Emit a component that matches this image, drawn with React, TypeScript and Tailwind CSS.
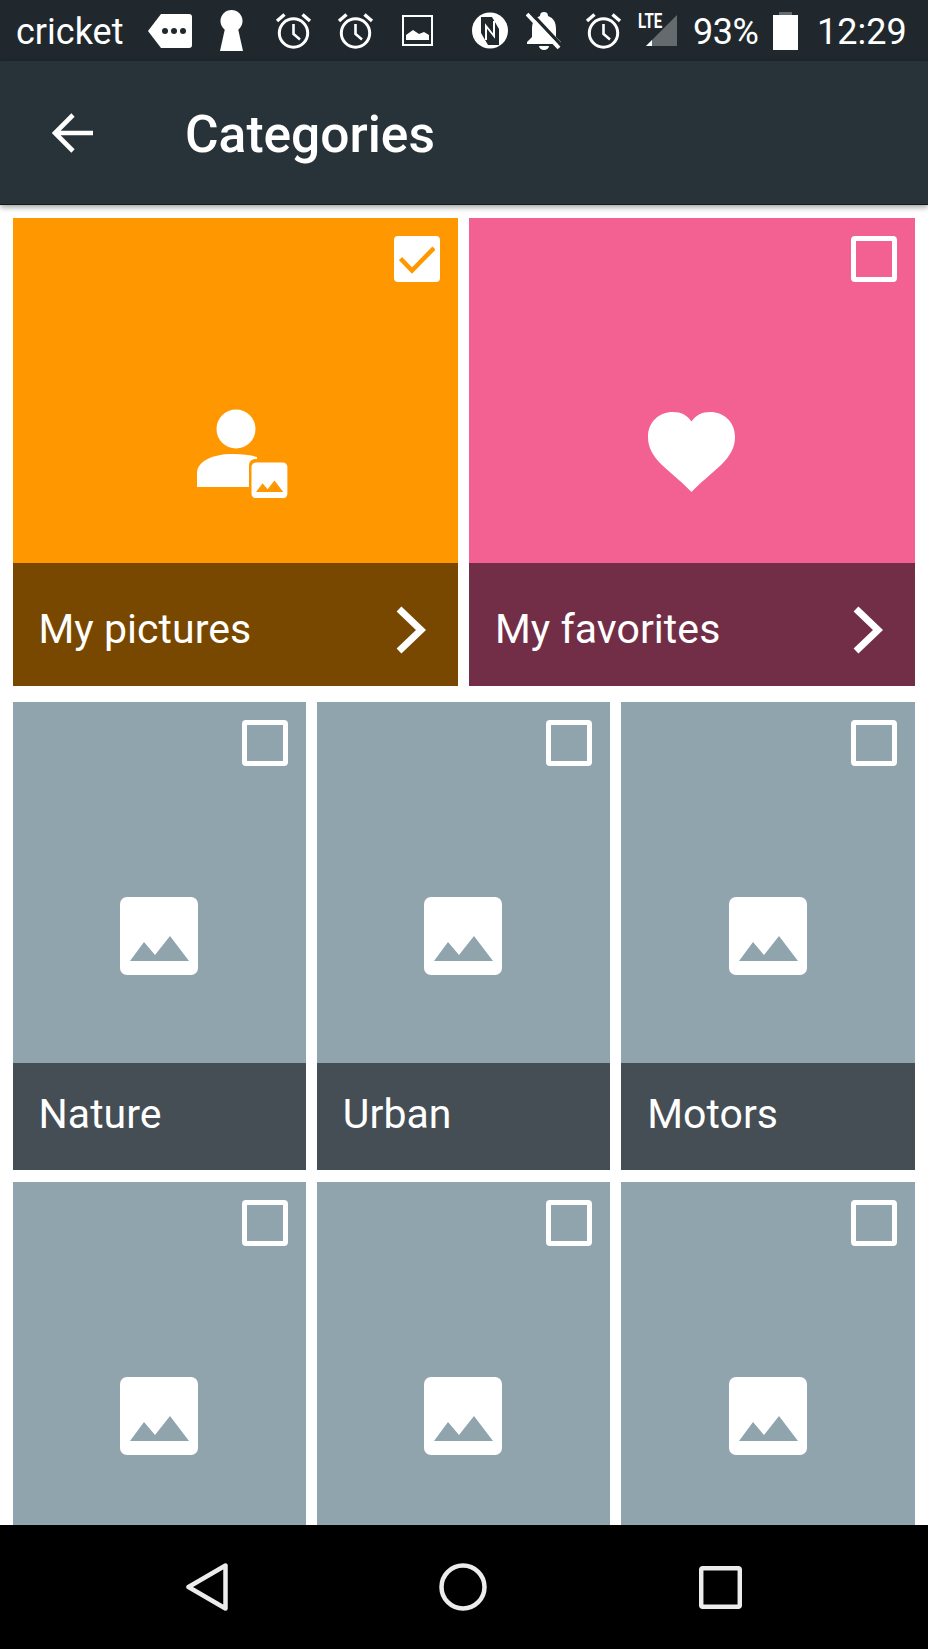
import React from 'react';

const Alarm = ({ className }: { className: string }) => (
    <svg className={className} viewBox="0 0 37 37" fill="none" stroke="white" strokeWidth="3">
        <circle cx="18.5" cy="21" r="14.2" />
        <path d="M18.5 12v10l6.5 5.5" strokeWidth="2.6" />
        <path d="M2 9l7.5-6.5M35 9l-7.5-6.5" strokeWidth="3.4" />
    </svg>
);

const PictureIcon = ({ className, fill = '#90a4ae' }: { className: string; fill?: string }) => (
    <svg className={className} viewBox="0 0 78 78">
        <rect width="78" height="78" rx="7" fill="white" />
        <path d="M10 64L24 45L35 58L50 39L69 64Z" fill={fill} />
    </svg>
);

const Checkbox = ({ checked = false }: { checked?: boolean }) => (
    <div
        className={`absolute top-[17.5px] right-[18px] w-[46px] h-[46.5px] rounded-[4px] border-[5px] border-white ${checked ? 'bg-white' : ''}`}
    >
        {checked && (
            <svg className="absolute top-[5px] left-[0px] w-[36px] h-[28px]" viewBox="0 0 36 28" fill="none">
                <path d="M1.5 12.5L13 24.5L35 2" stroke="#ff9800" strokeWidth="4.5" />
            </svg>
        )}
    </div>
);

const Chevron = () => (
    <svg className="w-[30px] h-[48px]" viewBox="0 0 30 48" fill="none">
        <path d="M3 3L25 24L3 45" stroke="white" strokeWidth="7" />
    </svg>
);

type TileProps = {
    label: string;
    bg: string;
    footer: string;
    checked?: boolean;
    chevron?: boolean;
    bodyHeight: string;
    footerHeight: string;
    children: React.ReactNode;
};

const Tile = ({ label, bg, footer, checked, chevron, bodyHeight, footerHeight, children }: TileProps) => (
    <div className={`relative flex flex-col ${bg}`}>
        <Checkbox checked={checked} />
        <div className={`flex items-center justify-center ${bodyHeight}`}>{children}</div>
        <div className={`flex items-center justify-between pl-[26px] pr-[32px] ${footer} ${footerHeight}`}>
            <span className="text-white text-[41px] leading-none tracking-[0.05px]">{label}</span>
            {chevron && <Chevron />}
        </div>
    </div>
);

const App: React.FC = () => {
    return (
        <div className="flex flex-col h-[1649px] w-[928px] overflow-hidden bg-white font-['Roboto',sans-serif]">
            {/* Status bar */}
            <div className="flex items-center h-[61px] pl-[16px] bg-[#20282d] text-white shrink-0">
                <span className="text-[36px] leading-none w-[105px] pt-[3px]">cricket</span>
                <svg className="ml-[27px] w-[44px] h-[34px]" viewBox="0 0 44 34">
                    <path d="M13 0H41a3 3 0 0 1 3 3V31a3 3 0 0 1-3 3H13L0 17Z" fill="white" />
                    <circle cx="17" cy="17" r="3" fill="#20282d" />
                    <circle cx="26" cy="17" r="3" fill="#20282d" />
                    <circle cx="35" cy="17" r="3" fill="#20282d" />
                </svg>
                <svg className="ml-[28px] w-[23px] h-[41px]" viewBox="0 0 23 41">
                    <circle cx="11.5" cy="11" r="11" fill="white" />
                    <path d="M6 14H17L23 41H0Z" fill="white" />
                </svg>
                <Alarm className="ml-[32px] w-[37px] h-[37px]" />
                <Alarm className="ml-[25px] w-[37px] h-[37px]" />
                <svg className="ml-[28px] w-[31px] h-[31px]" viewBox="0 0 31 31" fill="none">
                    <rect x="1" y="1" width="29" height="29" stroke="white" strokeWidth="2" />
                    <path d="M4 25V20L11 15L17 19L22 17L27 20V25Z" fill="white" />
                </svg>
                <svg className="ml-[39px] w-[36px] h-[37px]" viewBox="0 0 36 37">
                    <circle cx="18" cy="18.5" r="18" fill="white" />
                    <path d="M9 5L20 5L27 17V33L16 33L9 21Z" fill="#20282d" />
                    <path d="M14 28V14L22 24V9" fill="none" stroke="white" strokeWidth="2" />
                </svg>
                <svg className="ml-[18px] w-[36px] h-[38px]" viewBox="0 0 36 38">
                    <path d="M18 0a4 4 0 0 1 4 4c6 2 8 7 8 13v8l5 5v2H1v-2l5-5v-8c0-6 2-11 8-13a4 4 0 0 1 4-4Z" fill="white" />
                    <path d="M13 34h10a5 4 0 0 1-10 0Z" fill="white" />
                    <path d="M4 0L37 35" stroke="#20282d" strokeWidth="3.5" />
                    <path d="M1 2L33 36" stroke="white" strokeWidth="4" />
                </svg>
                <Alarm className="ml-[23px] w-[37px] h-[37px]" />
                <div className="relative ml-[16px] w-[39px] h-[38px]">
                    <svg className="absolute left-[8px] top-[3px] w-[31px] h-[31px]" viewBox="0 0 31 31">
                        <path d="M31 0V31H0Z" fill="#646a6d" />
                        <path d="M0 31L6 25V31Z" fill="white" />
                    </svg>
                    <span className="absolute left-0 -top-[3px] text-[21px] leading-[24px] font-bold scale-x-[0.72] origin-left">LTE</span>
                </div>
                <span className="ml-[16px] text-[36px] leading-none w-[67px] tracking-[-0.5px] pt-[3px]">93%</span>
                <svg className="ml-[13px] w-[25px] h-[38px]" viewBox="0 0 25 38">
                    <path d="M6 0H19V3H25V38H0V3H6Z" fill="white" />
                    <path d="M6 0H19V3H6Z" fill="#646a6d" />
                </svg>
                <span className="ml-[19px] text-[36px] leading-none pt-[3px]">12:29</span>
            </div>

            {/* App bar */}
            <div className="relative z-10 flex items-center h-[144px] shrink-0 bg-[#283339] border-b border-[#10181c] shadow-[0_2px_6px_rgba(0,0,0,0.4)]">
                <svg className="ml-[52px] w-[41px] h-[40px]" viewBox="0 0 41 40" fill="none">
                    <path d="M41 20H3M21 2L3 20L21 38" stroke="white" strokeWidth="4.6" />
                </svg>
                <h1 className="ml-[92px] pt-[4px] text-white text-[51.5px] leading-none font-medium">Categories</h1>
            </div>

            {/* Tiles */}
            <div className="flex-1 overflow-hidden pl-[12.5px] pr-[13.5px] pt-[13px]">
                <div className="grid grid-cols-2 gap-x-[11px]">
                    <Tile
                        label="My pictures"
                        bg="bg-[#ff9800]"
                        footer="bg-[#784800]"
                        checked
                        chevron
                        bodyHeight="h-[345px]"
                        footerHeight="h-[123px] pt-[10px]"
                    >
                        <svg className="w-[91px] h-[91px] mt-[123px] ml-[14px]" viewBox="0 0 91 91">
                            <circle cx="39" cy="22" r="19.5" fill="white" />
                            <path d="M0 80V66C0 55 14 47 36 47C46 47 54 48 60 50V80Z" fill="white" />
                            <rect x="52" y="52" width="39" height="39" rx="6" fill="#ff9800" />
                            <g transform="translate(54.5 55.5) scale(0.46)">
                                <rect width="78" height="78" rx="10" fill="white" />
                                <path d="M10 64L24 45L35 58L50 39L69 64Z" fill="#ff9800" />
                            </g>
                        </svg>
                    </Tile>
                    <Tile
                        label="My favorites"
                        bg="bg-[#f36092]"
                        footer="bg-[#722e47]"
                        chevron
                        bodyHeight="h-[345px]"
                        footerHeight="h-[123px] pt-[10px]"
                    >
                        <svg className="w-[87px] h-[80px] mt-[123px]" viewBox="0 0 87 80">
                            <path
                                d="M43.5 80C36 72 24 62 14 53C5 44 0 36 0 25C0 10 11 0 25 0C33 0 39 3 43.5 9.5C48 3 54 0 62 0C76 0 87 10 87 25C87 36 82 44 73 53C63 62 51 72 43.5 80Z"
                                fill="white"
                            />
                        </svg>
                    </Tile>
                </div>

                <div className="grid grid-cols-3 gap-x-[11px] gap-y-[12px] mt-[16px]">
                    {['Nature', 'Urban', 'Motors', '', '', ''].map((label, i) => (
                        <Tile
                            key={i}
                            label={label}
                            bg="bg-[#90a4ae]"
                            footer="bg-[#444e54]"
                            bodyHeight="h-[361px]"
                            footerHeight="h-[107px] pb-[4px]"
                        >
                            <PictureIcon className="w-[78px] h-[78px] mt-[107px]" />
                        </Tile>
                    ))}
                </div>
            </div>

            {/* Nav bar */}
            <div className="relative z-10 flex items-center h-[124px] shrink-0 bg-black">
                <svg className="ml-[186px] w-[42px] h-[48px]" viewBox="0 0 42 48" fill="none">
                    <path d="M39.5 2.5V45.5L2.5 24Z" stroke="#ececec" strokeWidth="4.5" strokeLinejoin="round" />
                </svg>
                <svg className="ml-[211px] w-[48px] h-[48px]" viewBox="0 0 48 48" fill="none">
                    <circle cx="24" cy="24" r="21.5" stroke="#ececec" strokeWidth="4.5" />
                </svg>
                <svg className="ml-[212px] w-[43px] h-[43px]" viewBox="0 0 43 43" fill="none">
                    <rect x="2.2" y="2.2" width="38.6" height="38.6" rx="1.5" stroke="#ececec" strokeWidth="4.5" />
                </svg>
            </div>
        </div>
    );
};

export default App;
